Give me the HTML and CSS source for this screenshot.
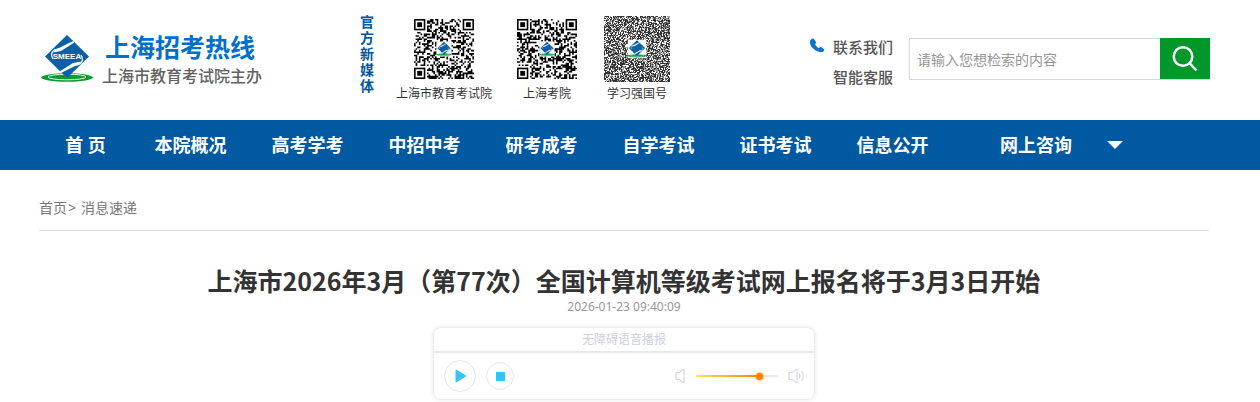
FILE: index.html
```html
<!DOCTYPE html>
<html lang="zh-CN">
<head>
<meta charset="utf-8">
<title>上海招考热线</title>
<link rel="stylesheet" href="styles.css">
</head>
<body>
<svg class="defs" aria-hidden="true">
  <symbol id="emblem" viewBox="0 0 54 48">
    <ellipse cx="27" cy="42.500" rx="26" ry="4.200" fill="#0a9a32"/>
    <ellipse cx="27" cy="42" rx="19" ry="2.800" fill="none" stroke="#fff" stroke-width=".9"/>
    <path d="M27 0 49 21.500 27 43 5 21.500Z" fill="#0860a8"/>
    <path d="M13 17.500C14 15 17 14 20 12.500L32 6.500q3-.8 2 1.200L21 16Z" fill="#fff"/>
    <path d="M41 26.500C40 29 37 30 34 31.500L22 37.500q-3 .8-2-1.200L33 28Z" fill="#fff"/>
    <path d="M19 14c-7 0-9 5-6 10M35 30c7 0 9-5 6-10" fill="none" stroke="#fff" stroke-width="1.200"/>
  </symbol>
</svg>
<header class="header wrap">
  <a class="logo" href="#">
    <svg class="logo-mark" viewBox="0 0 54 48" aria-hidden="true">
      <use href="#emblem"/>
      <text x="27" y="24" class="logo-letters">SMEEA</text>
    </svg>
    <span class="logo-text">
      <span class="logo-name">上海招考热线</span>
      <span class="logo-host">上海市教育考试院主办</span>
    </span>
  </a>
  <section class="media">
    <h2 class="media-title">官方新媒体</h2>
    <figure class="code code-office"><svg class="qr" data-size="37" data-seed="71"></svg><figcaption>上海市教育考试院</figcaption></figure>
    <figure class="code code-college"><svg class="qr" data-size="37" data-seed="245"></svg><figcaption>上海考院</figcaption></figure>
    <figure class="code code-study"><svg class="qr qr-dense" data-size="66" data-seed="903"></svg><figcaption>学习强国号</figcaption></figure>
  </section>
  <div class="contact">
    <svg class="phone" viewBox="0 0 16 16" aria-hidden="true"><path d="M1 3C2 1 4 0 5 1l2 3c.4 1-.2 1.500-1 2 1 2 2 3.400 4 4 .8-.9 1.400-1.300 2.300-.8l2.700 2c1 1-.8 2.800-2 3C7 14 0 9 1 3Z" fill="#0f72c5"/></svg>
    <a href="#">联系我们</a>
    <a class="service" href="#">智能客服</a>
  </div>
  <form class="search">
    <input class="search-input" type="text" placeholder="请输入您想检索的内容" aria-label="请输入您想检索的内容">
    <button class="search-button" type="button" aria-label="搜索"><svg viewBox="0 0 26 26" aria-hidden="true"><circle cx="11" cy="10.500" r="9.300"/><path d="m17.500 17 7 7.500"/></svg></button>
  </form>
</header>
<nav class="nav">
  <div class="nav-list wrap">
    <a class="nav-home" href="#">首 页</a>
    <a href="#">本院概况</a>
    <a href="#">高考学考</a>
    <a href="#">中招中考</a>
    <a href="#">研考成考</a>
    <a href="#">自学考试</a>
    <a href="#">证书考试</a>
    <a href="#">信息公开</a>
    <a class="nav-ask" href="#">网上咨询</a>
    <button class="nav-more" type="button" aria-label="更多"></button>
  </div>
</nav>
<main class="wrap">
  <div class="crumbs"><a href="#">首页</a><span>&gt;</span><a href="#">消息速递</a></div>
  <article class="article">
    <h1>上海市2026年3月（第77次）全国计算机等级考试网上报名将于3月3日开始</h1>
    <time datetime="2026-01-23T09:40:09">2026-01-23 09:40:09</time>
    <section class="player">
      <div class="player-title">无障碍语音播报</div>
      <div class="player-controls">
        <button class="round play" type="button" aria-label="播放"><svg viewBox="0 0 12 14"><path d="M1 1v12l10-6Z" stroke-linejoin="round"/></svg></button>
        <button class="round stop" type="button" aria-label="停止"><svg viewBox="0 0 9 9"><path d="M0 0h9v9H0Z"/></svg></button>
        <div class="volume">
          <svg class="speaker" viewBox="0 0 18 16" aria-hidden="true"><path d="M1 4.500h3L9 1v14l-5-3.500H1Z"/></svg>
          <input class="slider" type="range" min="0" max="100" value="80" aria-label="音量">
          <svg class="speaker" viewBox="0 0 18 16" aria-hidden="true"><path d="M1 4.500h3L9 1v14l-5-3.500H1ZM11 5.500q2 2.500 0 5M13.500 3q3.500 5 0 10"/></svg>
        </div>
      </div>
    </section>
  </article>
</main>
<script src="codes.js"></script>
</body>
</html>
```
FILE: styles.css
```css
* { box-sizing: border-box; }
body { margin: 0; background: #fff; color: #333; font-family: "Noto Sans", "Noto Sans CJK SC", sans-serif; font-size: 14px; }
a { color: inherit; text-decoration: none; }
button { border: 0; padding: 0; font: inherit; cursor: pointer; }
h1, h2, figure { margin: 0; }
svg { display: block; }
.defs { display: none; }
.wrap { max-width: 1248px; padding: 0 39px; }
.header { display: flex; height: 120px; padding-right: 38px; }
.logo { display: flex; flex: none; width: 321px; padding: 31px 0 0 1px; }
.logo-mark { width: 54px; height: 48px; margin-top: 4px; }
.logo-letters { fill: #fff; font: bold 8px "Liberation Sans", sans-serif; text-anchor: middle; }
.logo-text { display: flex; flex-direction: column; margin-left: 8px; }
.logo-name { color: #0070ca; font-size: 25px; font-weight: 700; line-height: 32px; padding-left: 3px; }
.logo-host { color: #626262; font-size: 16px; font-weight: 500; line-height: 26px; }
.media { display: flex; flex: none; }
.media-title { width: 16px; margin-top: 14px; color: #0059a1; font-size: 14px; line-height: 16px; }
.code { display: flex; flex-direction: column; align-items: center; padding-top: 19px; font-size: 12px; }
.code figcaption { line-height: 20px; margin-top: 5px; white-space: nowrap; }
.code-office { width: 96px; margin-left: 20px; }
.code-college { width: 60px; margin-left: 25px; }
.code-study { width: 66px; margin-left: 27px; padding-top: 16px; }
.code-study figcaption { margin-top: 2px; }
.qr { width: 60px; height: 60px; }
.qr-dense { width: 66px; height: 66px; }
.contact { display: grid; grid-template-columns: 24px 60px; grid-auto-rows: 30px; margin-left: auto; padding-top: 32px; color: #555; font-size: 15px; font-weight: 500; line-height: 30px; white-space: nowrap; }
.phone { width: 16px; height: 16px; margin-top: 6px; }
.service { grid-column: 2; }
.search { display: flex; flex: none; width: 301px; height: 42px; margin: 38px 0 0 16px; }
.search-input { flex: 1; min-width: 0; padding: 0 7px; border: 1px solid #d6d6d6; border-right: 0; font: inherit; color: #555; outline: 0; }
.search-input::placeholder { color: #969696; }
.search-button { display: grid; place-items: center; width: 50px; background: #00982b; border-bottom: 1px solid #d6d6d6; }
.search-button svg { width: 26px; height: 26px; fill: none; stroke: #fff; stroke-width: 2.5; }
.nav { background: #0059a1; color: #fff; }
.nav-list { display: flex; align-items: center; height: 50px; font-size: 18px; font-weight: 700; white-space: nowrap; }
.nav-list a { flex: none; width: 117px; text-align: center; line-height: 50px; }
.nav-list .nav-home { width: 93px; }
.nav-list .nav-ask { width: 170px; }
.nav-more { width: 16px; height: 8px; margin-left: -14px; background: #fff; clip-path: polygon(0 0, 100% 0, 50% 100%); }
.crumbs { display: flex; height: 61px; padding-top: 28px; border-bottom: 1px solid #dcdcdc; color: #777; line-height: 20px; }
.crumbs span { margin: 0 5px 0 1px; }
.article { display: flex; flex-direction: column; align-items: center; padding: 31px 0 8px; }
.article h1 { font-family: "Noto Sans CJK SC", sans-serif; font-size: 25px; line-height: 36px; text-align: center; }
.article time { color: #999; font-size: 12px; line-height: 18px; }
.player { width: 382px; max-width: 100%; margin-top: 11px; border: 1px solid #eee; border-radius: 8px; box-shadow: 0 0 4px #e6e6e6; }
.player-title { height: 25px; border-bottom: 2px solid #e5e8f0; color: #cdcfdf; font-size: 12px; line-height: 24px; text-align: center; }
.player-controls { display: flex; align-items: center; height: 46px; padding: 0 8px 0 10px; }
.round { display: grid; place-items: center; border: 1px solid #e6e6f0; border-radius: 50%; background: #fff; }
.round svg { fill: #34c3ff; stroke: #34c3ff; }
.play { width: 32px; height: 32px; }
.play svg { width: 12px; height: 14px; margin-left: 2px; }
.stop { width: 28px; height: 28px; margin-left: 10px; }
.stop svg { width: 9px; height: 9px; stroke: none; }
.volume { display: flex; align-items: center; margin-left: auto; }
.speaker { width: 18px; height: 16px; fill: none; stroke: #d0d1db; stroke-width: 1; }
.slider { appearance: none; width: 82px; height: 16px; margin: 0 10px 0 3px; background: linear-gradient(90deg, #ffe45c, #ff8000 78%, #e5e8f0 78%) center / 100% 2px no-repeat; }
.slider::-webkit-slider-thumb { appearance: none; width: 7px; height: 7px; border-radius: 50%; background: #ff8000; box-shadow: 0 0 3px #ff8000; }
```
FILE: codes.js
```js
const NS = "http://www.w3.org/2000/svg";

function add(parent, name, attrs) {
  const node = document.createElementNS(NS, name);
  for (const key in attrs) node.setAttribute(key, attrs[key]);
  parent.appendChild(node);
}

document.querySelectorAll(".qr").forEach((svg) => {
  const n = Number(svg.dataset.size);
  const dense = svg.classList.contains("qr-dense");
  let seed = Number(svg.dataset.seed);
  const random = () => {
    seed = (seed * 1664525 + 1013904223) % 4294967296;
    return seed / 4294967296;
  };
  svg.setAttribute("viewBox", `0 0 ${n} ${n}`);
  let dark = "";
  let grey = "";
  for (let y = 0; y < n; y++) {
    for (let x = 0; x < n; x++) {
      const r = random();
      if (r < 0.48) dark += `M${x} ${y}h1v1h-1z`;
      else if (dense && r < 0.75) grey += `M${x} ${y}h1v1h-1z`;
    }
  }
  add(svg, "path", { d: dark, fill: dense ? "#333" : "#000" });
  add(svg, "path", { d: grey, fill: "#999" });
  if (!dense) {
    [[0, 0], [n - 7, 0], [0, n - 7]].forEach(([x, y]) => {
      add(svg, "rect", { x: x - 1, y: y - 1, width: 9, height: 9, fill: "#fff" });
      add(svg, "rect", { x: x + 0.5, y: y + 0.5, width: 6, height: 6, fill: "none", stroke: "#000" });
      add(svg, "rect", { x: x + 2, y: y + 2, width: 3, height: 3, fill: "#000" });
    });
  }
  const side = n * (dense ? 0.28 : 0.25);
  const start = (n - side) / 2;
  const mark = side * 1.08;
  const markStart = (n - mark) / 2;
  add(svg, "rect", { x: start, y: start, width: side, height: side, fill: "#fff" });
  add(svg, "use", { href: "#emblem", x: markStart, y: markStart, width: mark, height: mark });
});
```
